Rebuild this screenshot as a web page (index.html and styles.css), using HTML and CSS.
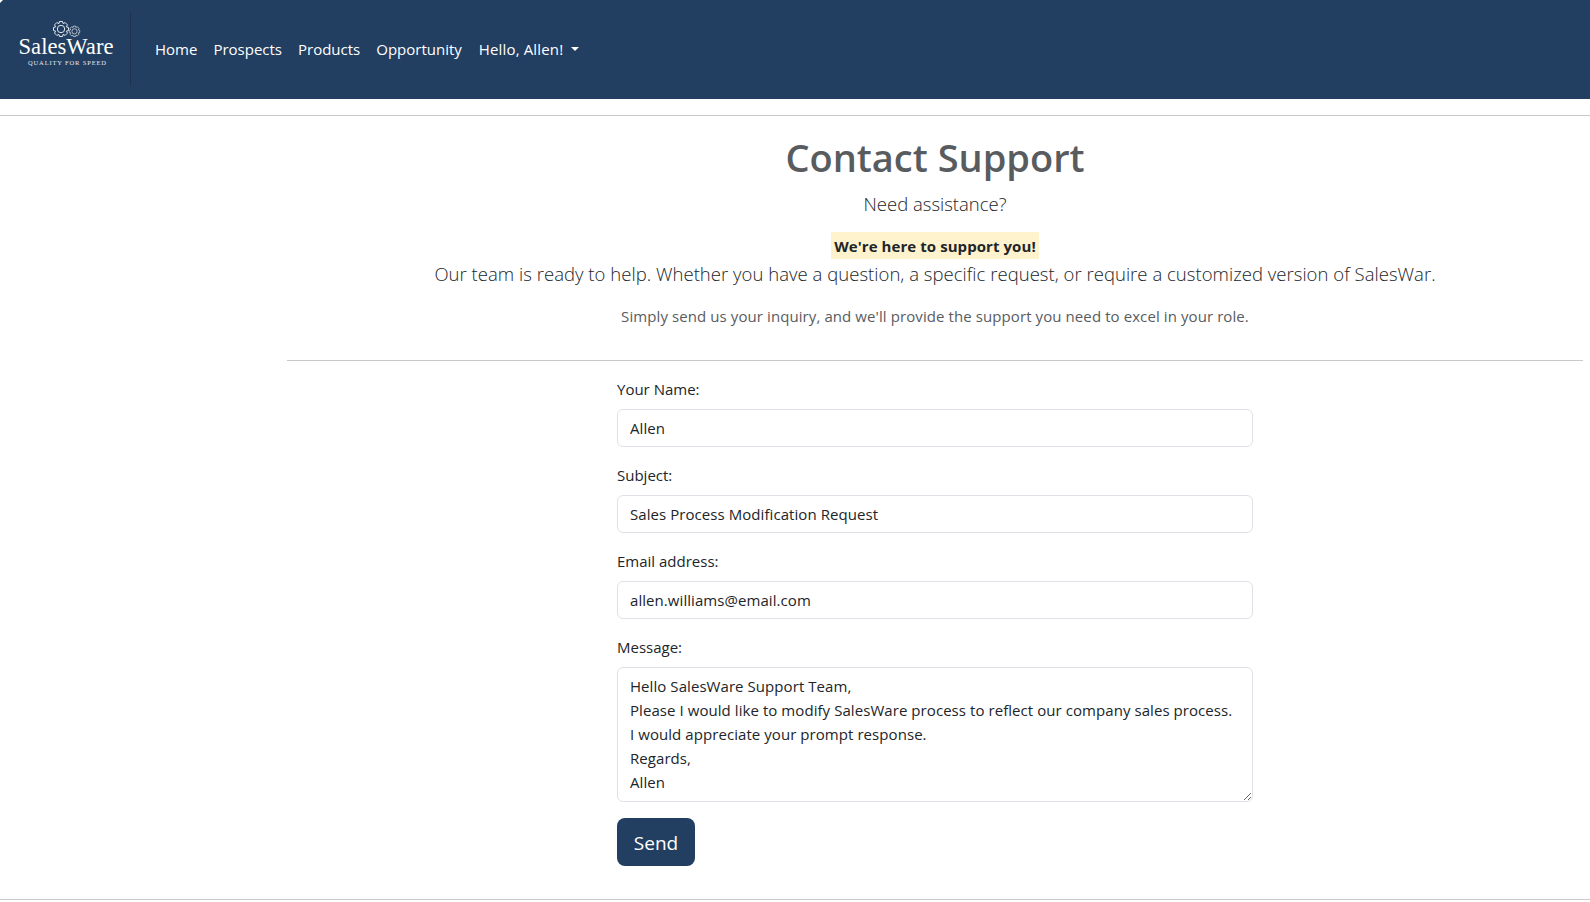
FILE: index.html
```html
<!DOCTYPE html>
<html lang="en">
<head>
<meta charset="utf-8">
<title>SalesWare - Contact Support</title>
<link rel="stylesheet" href="styles.css">
</head>
<body>
<header class="navbar">
  <a class="brand" href="#">
    <svg class="logo" width="131" height="99" viewBox="0 0 131 99" fill="none" stroke="#e3e8ee">
      <path d="M0 0H3L0 3Z" fill="#fff" stroke="none"/>
      <g transform="translate(61 29)">
        <path id="gear" stroke-linejoin="round" d="M-1.500 -7.500H1.500L2 -5.500L4.200 -6.400L6.400 -4.200L5.500 -2L7.500 -1.500V1.500L5.500 2L6.400 4.200L4.200 6.400L2 5.500L1.500 7.500H-1.500L-2 5.500L-4.200 6.400L-6.400 4.200L-5.500 2L-7.500 1.500V-1.500L-5.500 -2L-6.400 -4.200L-4.200 -6.400L-2 -5.500Z"/>
        <circle r="3.700"/>
      </g>
      <g transform="translate(74.500 31.300) scale(.7)">
        <use href="#gear"/>
        <circle r="3.700"/>
      </g>
      <text class="logo-name" x="18.500" y="53.500" textLength="95" lengthAdjust="spacingAndGlyphs">SalesWare</text>
      <text class="logo-tag" x="28" y="65.400" textLength="78">QUALITY FOR SPEED</text>
      <path d="M130.500 12V86" stroke="#1c3450"/>
    </svg>
  </a>
  <nav class="nav">
    <a href="#">Home</a>
    <a href="#">Prospects</a>
    <a href="#">Products</a>
    <a href="#">Opportunity</a>
    <a class="user" href="#">Hello, Allen!<span class="caret"></span></a>
  </nav>
</header>
<hr class="rule top-rule">
<main class="content">
  <section class="intro">
    <h1>Contact Support</h1>
    <p class="lead need">Need assistance?</p>
    <div class="mark-row"><mark>We're here to support you!</mark></div>
    <p class="lead team">Our team is ready to help. Whether you have a question, a specific request, or require a customized version of SalesWar.</p>
    <p class="note">Simply send us your inquiry, and we'll provide the support you need to excel in your role.</p>
  </section>
  <hr class="rule">
  <form class="form">
    <label for="name">Your Name:</label>
    <input id="name" type="text" value="Allen">
    <label for="subject">Subject:</label>
    <input id="subject" type="text" value="Sales Process Modification Request">
    <label for="email">Email address:</label>
    <input id="email" type="text" value="allen.williams@email.com">
    <label for="message">Message:</label>
    <textarea id="message">Hello SalesWare Support Team,
Please I would like to modify SalesWare process to reflect our company sales process.
I would appreciate your prompt response.
Regards,
Allen</textarea>
    <button type="button">Send</button>
  </form>
</main>
<hr class="rule">
</body>
</html>
```
FILE: styles.css
```css
* { box-sizing: border-box; }
body {
  margin: 0;
  height: 902px;
  overflow: hidden;
  background: #fff;
  color: #212529;
  font: 15px/24px "Open Sans", "Noto Sans", sans-serif;
}
.navbar { display: flex; align-items: center; height: 99px; background: #223e61; }
.brand { display: block; height: 99px; width: 147px; }
.logo { display: block; }
.logo-name { font: 22.500px "Liberation Serif", serif; fill: #fff; stroke: none; }
.logo-tag { font: 6.500px "Liberation Serif", serif; fill: #e3e8ee; stroke: none; }
.nav { display: flex; padding-bottom: 2px; }
.nav a { padding: 0 8px; color: #fff; text-decoration: none; white-space: nowrap; }
.nav .user { padding-left: 9px; letter-spacing: .15px; }
.caret {
  display: inline-block;
  margin-left: 8px;
  vertical-align: 4px;
  border-top: 4px solid #fff;
  border-left: 4px solid transparent;
  border-right: 4px solid transparent;
}
.rule { margin: 0; border: 0; height: 1px; background: #c8c9ca; }
.top-rule { margin-top: 16px; }
.content { padding: 16px 7px 33px 287px; }
.intro { height: 228px; text-align: center; white-space: nowrap; }
h1 { margin: 0; padding-top: 1px; font-size: 38px; line-height: 48px; font-weight: 600; color: #595c5f; }
p { margin: 0; }
.lead { font-size: 18.500px; line-height: 30px; font-weight: 300; }
.need { margin-top: 8px; }
.team { margin-top: -1px; letter-spacing: .03px; }
.mark-row { margin-top: 11px; height: 30px; display: flex; justify-content: center; align-items: center; }
mark { width: 208px; height: 27px; padding: 2px 0 0; background: #fff3cd; color: #212529; font-weight: 700; letter-spacing: .07px; }
.note { margin-top: 15px; color: #595c5f; letter-spacing: .09px; }
.form { display: flex; flex-direction: column; width: 636px; margin: 16px auto 0; }
label { margin-bottom: 8px; }
input, textarea {
  display: block;
  width: 100%;
  height: 38px;
  margin: 0 0 16px;
  padding: 6px 12px;
  border: 1px solid #dee2e6;
  border-radius: 6px;
  background: #fff;
  color: #212529;
  font: inherit;
  letter-spacing: .065px;
}
textarea { height: 135px; overflow: hidden; resize: vertical; }
button {
  align-self: flex-start;
  width: 78px;
  height: 48px;
  padding: 2px 0 0;
  border: 0;
  border-radius: 8px;
  background: #223e61;
  color: #fff;
  font: 19px/30px "Open Sans", "Noto Sans", sans-serif;
}
```
